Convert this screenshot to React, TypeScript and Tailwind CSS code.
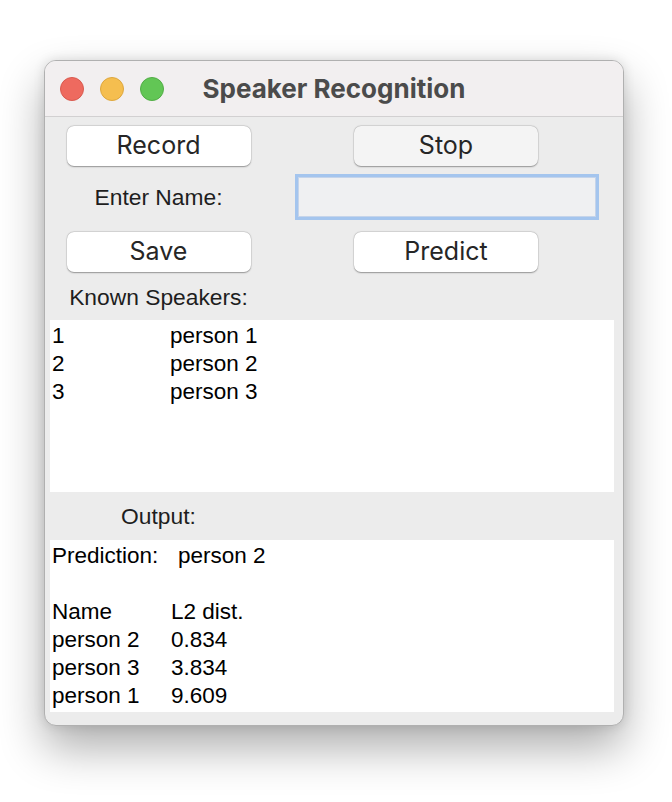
import React from "react";

const btn =
  "w-[184px] h-[40px] rounded-[7px] bg-white text-[#262626] text-[25px] flex items-center justify-center shadow-[0_0.5px_1.5px_rgba(0,0,0,0.35),0_0_0_0.5px_rgba(0,0,0,0.08)]";
const ui = { fontFamily: "Inter, 'Noto Sans', sans-serif" } as React.CSSProperties;
const hv = { fontFamily: "'Liberation Sans', Arial, sans-serif" } as React.CSSProperties;
const label = "w-[226px] flex justify-center text-[22.8px] text-[#1e1e1e] pl-[1px]";

export default function App() {
  return (
    <div className="w-[672px] h-[802px] bg-white pt-[60px] pl-[44px]">
      <div className="w-[580px] h-[666px] rounded-[12px] border border-[#b0b0b0] bg-[#ececec] overflow-hidden shadow-[0_22px_45px_rgba(0,0,0,0.32),0_0_12px_rgba(0,0,0,0.12)] flex flex-col">
        {/* title bar */}
        <div className="h-[56px] shrink-0 bg-[#f2eff0] border-b border-[#d2d0d1] flex items-center relative">
          <div className="flex items-center gap-[16px] pl-[15px]">
            <div className="w-[24px] h-[24px] rounded-full bg-[#ee6a5f] border border-[#d95a4f]" />
            <div className="w-[24px] h-[24px] rounded-full bg-[#f5be4f] border border-[#dea73e]" />
            <div className="w-[24px] h-[24px] rounded-full bg-[#62c655] border border-[#52ad46]" />
          </div>
          <div
            className="absolute inset-0 flex items-center justify-center text-[26px] font-bold text-[#4b4b4b] pb-[1px]"
            style={ui}
          >
            Speaker Recognition
          </div>
        </div>

        {/* body */}
        <div className="flex flex-col">
          <div className="flex mt-[9px]">
            <div className="w-[226px] flex justify-center pl-[1px]">
              <div className={btn} style={ui}>Record</div>
            </div>
            <div className="w-[350px] flex justify-center">
              <div className={btn + " !bg-[#f4f4f4]"} style={ui}>Stop</div>
            </div>
          </div>

          <div className="flex mt-[8px] h-[46px] items-center">
            <div className={label} style={hv}>
              Enter Name:
            </div>
            <div className="w-[350px] flex justify-center pl-[2px]">
              <div className="w-[304px] h-[46px] border-[3px] border-[#a4c5ee] bg-[#eff0f2] shadow-[inset_0_0_0_1px_rgba(120,160,220,0.35)]" />
            </div>
          </div>

          <div className="flex mt-[12px]">
            <div className="w-[226px] flex justify-center pl-[1px]">
              <div className={btn} style={ui}>Save</div>
            </div>
            <div className="w-[350px] flex justify-center">
              <div className={btn} style={ui}>Predict</div>
            </div>
          </div>

          <div className="flex h-[48px] items-center">
            <div className={label + " pt-[2px]"} style={hv}>
              Known Speakers:
            </div>
          </div>

          <div className="ml-[5px] w-[564px] h-[172px] bg-white pt-[2px] pl-[2px] text-[22.5px] leading-[28px] text-black" style={hv}>
            {[
              ["1", "person 1"],
              ["2", "person 2"],
              ["3", "person 3"],
            ].map(([n, p]) => (
              <div key={n} className="flex">
                <span className="w-[118px]">{n}</span>
                <span>{p}</span>
              </div>
            ))}
          </div>

          <div className="flex h-[48px] items-center">
            <div className={label} style={hv}>
              Output:
            </div>
          </div>

          <div className="ml-[5px] w-[564px] h-[172px] bg-white pt-[2px] pl-[2px] text-[22.5px] leading-[28px] text-black" style={hv}>
            <div className="flex">
              <span className="w-[126px]">Prediction:</span>
              <span>person 2</span>
            </div>
            <div className="h-[28px]" />
            {[
              ["Name", "L2 dist."],
              ["person 2", "0.834"],
              ["person 3", "3.834"],
              ["person 1", "9.609"],
            ].map(([a, b]) => (
              <div key={a} className="flex">
                <span className="w-[119px]">{a}</span>
                <span>{b}</span>
              </div>
            ))}
          </div>
        </div>
      </div>
    </div>
  );
}
